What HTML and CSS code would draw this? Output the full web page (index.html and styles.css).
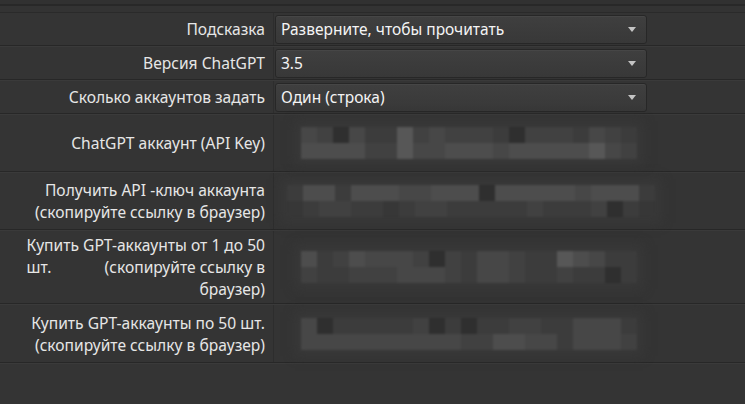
FILE: index.html
```html
<!DOCTYPE html>
<html lang="ru">
<head>
<meta charset="utf-8">
<link rel="stylesheet" href="styles.css">
</head>
<body>
<div class="top-band"></div>
<div class="top-band2"></div>
<div class="form">
  <div class="row r-select">
    <div class="label">Подсказка</div>
    <div class="value"><div class="select"><span>Разверните, чтобы прочитать</span><i class="arrow"></i></div></div>
  </div>
  <div class="row r-select">
    <div class="label">Версия ChatGPT</div>
    <div class="value"><div class="select"><span>3.5</span><i class="arrow"></i></div></div>
  </div>
  <div class="row r-select">
    <div class="label">Сколько аккаунтов задать</div>
    <div class="value"><div class="select"><span>Один (строка)</span><i class="arrow"></i></div></div>
  </div>
  <div class="row r-key">
    <div class="label">ChatGPT аккаунт (API Key)</div>
    <div class="value">
      <div class="blur b-key">
        <div class="px"><i class="s3"></i><i class="s2"></i><i class="sd"></i><i class="s3"></i><i class="s1"></i><i class="s1"></i><i class="s5"></i><i class="s2"></i><i class="s3"></i><i class="s2"></i><i class="s2"></i><i class="s2"></i><i class="s1"></i><i class="sd"></i><i class="s2"></i><i class="s2"></i><i class="s2"></i><i class="s1"></i><i class="s3"></i><i class="s2"></i><i class="s1"></i></div>
        <div class="px"><i class="s4"></i><i class="s4"></i><i class="s4"></i><i class="s4"></i><i class="s2"></i><i class="s2"></i><i class="s5"></i><i class="s3"></i><i class="s3"></i><i class="s4"></i><i class="s4"></i><i class="s4"></i><i class="s3"></i><i class="s4"></i><i class="s4"></i><i class="s4"></i><i class="s4"></i><i class="s4"></i><i class="s5"></i><i class="s3"></i><i class="s2"></i></div>
      </div>
    </div>
  </div>
  <div class="row r-key">
    <div class="label">Получить API -ключ аккаунта<br>(скопируйте ссылку в браузер)</div>
    <div class="value">
      <div class="blur b-link">
        <div class="px"><i class="s1"></i><i class="s4"></i><i class="s4"></i><i class="s1"></i><i class="s4"></i><i class="s4"></i><i class="s4"></i><i class="s3"></i><i class="s3"></i><i class="s4"></i><i class="s4"></i><i class="s4"></i><i class="sd"></i><i class="s4"></i><i class="s4"></i><i class="s4"></i><i class="s4"></i><i class="s4"></i><i class="s3"></i><i class="s4"></i><i class="s4"></i><i class="s4"></i><i class="s1"></i></div>
        <div class="px"><i class="s0"></i><i class="s1"></i><i class="s2"></i><i class="s2"></i><i class="s1"></i><i class="s1"></i><i class="s0"></i><i class="s1"></i><i class="s2"></i><i class="s2"></i><i class="s1"></i><i class="s1"></i><i class="s1"></i><i class="s1"></i><i class="s1"></i><i class="s2"></i><i class="s1"></i><i class="s1"></i><i class="s1"></i><i class="s2"></i><i class="sd"></i><i class="s1"></i><i class="s0"></i></div>
      </div>
    </div>
  </div>
  <div class="row r-buy1">
    <div class="label"><div class="stack"><div>Купить GPT-аккаунты от 1 до 50</div><div class="spread"><span>шт.</span><span>(скопируйте ссылку в</span></div><div>браузер)</div></div></div>
    <div class="value">
      <div class="blur b-buy">
        <div class="px"><i class="s4"></i><i class="s1"></i><i class="s2"></i><i class="s4"></i><i class="s3"></i><i class="s3"></i><i class="s3"></i><i class="s2"></i><i class="sd"></i><i class="s2"></i><i class="s1"></i><i class="s3"></i><i class="s3"></i><i class="s2"></i><i class="s1"></i><i class="s1"></i><i class="s5"></i><i class="s4"></i><i class="s3"></i><i class="s1"></i><i class="s1"></i></div>
        <div class="px"><i class="s2"></i><i class="s1"></i><i class="s1"></i><i class="s2"></i><i class="s2"></i><i class="s2"></i><i class="s3"></i><i class="s3"></i><i class="s3"></i><i class="s2"></i><i class="s1"></i><i class="s3"></i><i class="s3"></i><i class="s2"></i><i class="s1"></i><i class="s1"></i><i class="s2"></i><i class="s1"></i><i class="s1"></i><i class="sd"></i><i class="s1"></i></div>
      </div>
    </div>
  </div>
  <div class="row r-buy2">
    <div class="label">Купить GPT-аккаунты по 50 шт.<br>(скопируйте ссылку в браузер)</div>
    <div class="value">
      <div class="blur b-buy2">
        <div class="px"><i class="s3"></i><i class="sd"></i><i class="s1"></i><i class="s1"></i><i class="s1"></i><i class="s1"></i><i class="s1"></i><i class="s2"></i><i class="sd"></i><i class="s1"></i><i class="sd"></i><i class="s1"></i><i class="s1"></i><i class="s2"></i><i class="s2"></i><i class="s1"></i><i class="s1"></i><i class="s3"></i><i class="s3"></i><i class="s3"></i><i class="s1"></i></div>
        <div class="px"><i class="s3"></i><i class="s3"></i><i class="s3"></i><i class="s3"></i><i class="s3"></i><i class="s3"></i><i class="s3"></i><i class="s3"></i><i class="s3"></i><i class="s3"></i><i class="s2"></i><i class="s2"></i><i class="s4"></i><i class="s4"></i><i class="s3"></i><i class="s3"></i><i class="s1"></i><i class="s3"></i><i class="s3"></i><i class="s3"></i><i class="s2"></i></div>
      </div>
    </div>
  </div>
</div>
</body>
</html>
```

FILE: styles.css
```css
html, body {
  margin: 0;
  padding: 0;
  background: #343434;
  width: 745px;
  height: 404px;
  overflow: hidden;
  font-family: "Noto Sans", "Open Sans", sans-serif;
  font-size: 15.6px;
  color: #e6e6e6;
}
.top-band {
  height: 4px;
  background: #313131;
  border-bottom: 2px solid #282828;
}
.top-band2 {
  height: 6px;
  background: #333333;
  border-bottom: 1px solid #2a2a2a;
}
.form {
  display: flex;
  flex-direction: column;
}
.row {
  display: flex;
  border-bottom: 1px solid #272727;
  box-shadow: 0 1px 0 #3a3a3a;
  margin-bottom: 1px;
}
.r-select { height: 32px; }
.r-key { height: 56px; }
.r-buy1 { height: 72px; }
.r-buy2 { height: 57px; }
.label {
  width: 265px;
  padding-right: 8px;
  border-right: 1px solid #2d2d2d;
  display: flex;
  align-items: center;
  justify-content: flex-end;
  text-align: right;
  line-height: 22px;
  color: #e6e6e6;
}
.stack {
  display: flex;
  flex-direction: column;
  align-items: flex-end;
}
.spread {
  align-self: stretch;
  display: flex;
  justify-content: space-between;
}
.value {
  flex: 0 0 auto;
  width: 374px;
  padding-left: 1px;
  display: flex;
  align-items: center;
}
.select {
  width: 372px;
  height: 29px;
  box-sizing: border-box;
  border: 1px solid #272727;
  border-radius: 3px;
  background: linear-gradient(#3f3f3f, #383838);
  box-shadow: inset 0 1px 0 #464646;
  display: flex;
  align-items: center;
  justify-content: space-between;
  padding: 0 10px 0 5px;
  color: #f4f4f4;
  font-size: 15.5px;
}
.arrow {
  width: 0;
  height: 0;
  border-left: 4px solid transparent;
  border-right: 4px solid transparent;
  border-top: 5px solid #c4c4c4;
}
.blur {
  display: flex;
  flex-direction: column;
  filter: blur(1px);
  box-shadow: 0 0 10px 6px #383838;
  background: #383838;
}
.b-key { margin-left: 26px; }
.b-link { margin-left: 12px; }
.b-buy { margin-left: 26px; }
.b-buy2 { margin-left: 26px; }
.px { display: flex; }
.px i {
  display: block;
  width: 16px;
  height: 16px;
}
.s0 { background: #373737; }
.s1 { background: #3c3c3c; }
.s2 { background: #414141; }
.s3 { background: #474747; }
.s4 { background: #4d4d4d; }
.s5 { background: #575757; }
.sd { background: #2f2f2f; }
```
